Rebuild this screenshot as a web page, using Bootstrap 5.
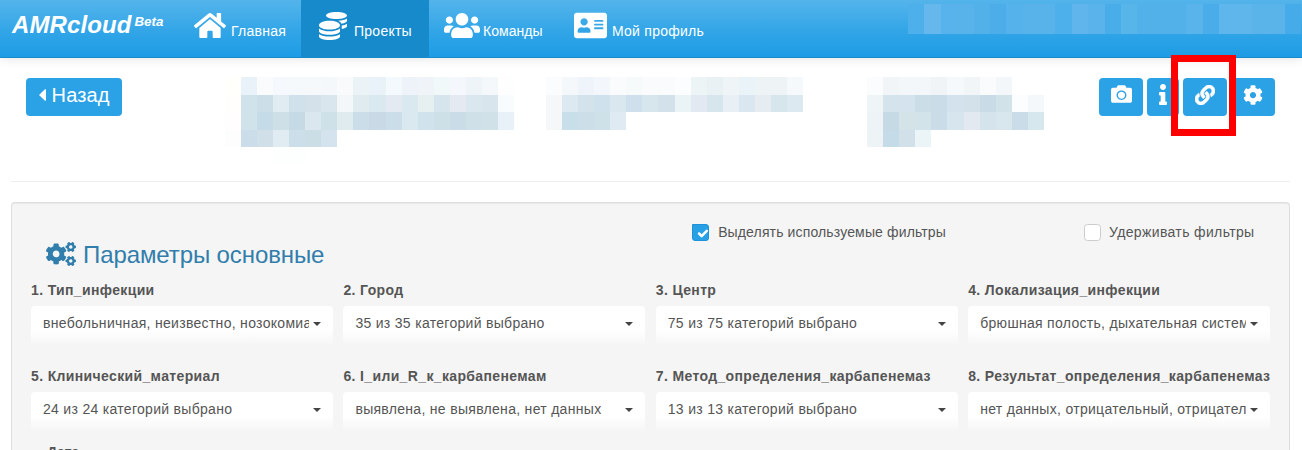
<!DOCTYPE html>
<html lang="ru">
<head>
<meta charset="utf-8">
<meta name="viewport" content="width=device-width, initial-scale=1">
<title>AMRcloud</title>
<link href="https://cdn.jsdelivr.net/npm/bootstrap@5.3.0/dist/css/bootstrap.min.css" rel="stylesheet">
<style>
body{font-family:"Liberation Sans",Arial,sans-serif;font-size:14px;line-height:20px;color:#555;background:#fff;height:450px;overflow:hidden}
svg{fill:currentColor;display:block;flex:none}
.topbar{height:58px;background:linear-gradient(#54b4eb,#2fa4e7 60%,#1d9ce5);border-bottom:1px solid #178acc;box-shadow:0 1px 10px rgba(0,0,0,.1);color:#fff}
.brand{width:178px;padding:11px 0 0 12px;font:italic bold 24px/28px "Liberation Sans",Arial,sans-serif;letter-spacing:.1px;color:#fff;white-space:nowrap}
.brand sup{font-size:13.3px;letter-spacing:0;line-height:0;top:-7px;margin-left:3px;vertical-align:baseline}
.topbar .nav-link{height:57px;padding:0 0 0 16px;color:#fff;font-size:14px;letter-spacing:.25px;line-height:20px;white-space:nowrap;gap:5px}
.topbar .nav-link span{margin-top:21px}
.topbar .nav-link svg{margin-top:10px}
.topbar .nav-link.active{background:#178acc}
.w-home{width:123px}.w-proj{width:128px}.w-team{width:129px}
.topbar .w-team{padding-left:15px;gap:3px;letter-spacing:.05px}
.mosaic{display:grid;flex:none}
.account{width:393px;margin:4px 1px 0 0}
.account i{height:30px}
.strip{height:124px;margin:0 12px 0 11px;border-bottom:1px solid #eee}
.btn-sky{--bs-btn-color:#fff;--bs-btn-bg:#2fa4e7;--bs-btn-border-color:#2fa4e7;--bs-btn-hover-bg:#178acc;--bs-btn-hover-color:#fff;height:38px;border-radius:4px;padding:0;background:#2ba1e6;border:0;display:flex;justify-content:center;color:#fff}
.back{width:96px;font-size:20px;letter-spacing:.1px;line-height:34px;margin:20px 0 0 15px;gap:6px}
.tool-row{margin:20px 15px 0 0;gap:4px}
.tool-row .btn-sky{width:44px;padding-top:8px}
.tool-row .slim{width:32px}
.spot{position:absolute;left:-12px;top:-23px;width:65px;height:81px;border:7px solid #f00;z-index:5;pointer-events:none}
.blk{margin-top:19px}
.panel{margin:20px 12px 0 11px;height:248px;overflow:hidden;background:#f5f5f5;border:1px solid #dedede;border-bottom:0;border-radius:4px 4px 0 0;box-shadow:inset 0 1px 1px rgba(0,0,0,.05);padding:0 19px}
.panel-top{height:77px}
.panel h3{font-size:24px;letter-spacing:-.1px;line-height:28px;color:#317eac;margin:38px 0 0 15px;font-weight:400;gap:7px}
.check{gap:9px;height:20px;margin-top:19px;letter-spacing:.14px}
.check input{width:17px;height:17px;margin:0;border-radius:3px;border:1px solid #ccc;box-shadow:none;background-color:#fff}
.check input:checked{background-color:#28a0e6;border-color:#1f93d8;border-radius:0 3px 3px 3px;background-size:17px 17px;background-position:1px 0}
.check.hold{width:171px;margin:19px 15px 0 138px;gap:8px;letter-spacing:.36px;white-space:nowrap}
.filters{display:grid;grid-template-columns:repeat(4,302px);column-gap:10.4px}
.filters label{display:block;font-weight:bold;font-size:14px;letter-spacing:.36px;line-height:20px;margin-bottom:6px;white-space:nowrap}
.filter-item{height:86px}
.pick{height:40px;border-radius:4px;background:linear-gradient(#fff 60%,#f5f5f5);padding:7px 12px 0 12px;line-height:20px;letter-spacing:.3px;white-space:nowrap}
.pick span{overflow:hidden}
.pick::after{content:"";flex:none;margin:9px 0 0 4px;border:4px solid transparent;border-top-color:#444;border-bottom:0}
</style>
</head>
<body>
<svg width="0" height="0" class="position-absolute"><defs>
<g id="cog-s"><path fill-rule="evenodd" d="M512.1 191l-8.2 14.3c-3 5.3-9.4 7.5-15.1 5.4-11.8-4.4-22.6-10.7-32.1-18.6-4.6-3.8-5.8-10.5-2.8-15.7l8.2-14.3c-6.9-8-12.3-17.3-15.9-27.4h-16.5c-6 0-11.2-4.3-12.2-10.3-2-12-2.1-24.6 0-37.1 1-6 6.2-10.4 12.2-10.4h16.5c3.6-10.1 9-19.4 15.9-27.4l-8.2-14.3c-3-5.2-1.9-11.9 2.8-15.7 9.5-7.9 20.4-14.2 32.1-18.6 5.7-2.1 12.1.1 15.1 5.4l8.2 14.3c10.5-1.9 21.2-1.9 31.7 0L552 6.3c3-5.3 9.4-7.5 15.1-5.4 11.8 4.4 22.6 10.7 32.1 18.6 4.6 3.8 5.8 10.5 2.8 15.7l-8.2 14.3c6.9 8 12.3 17.3 15.9 27.4h16.5c6 0 11.2 4.3 12.2 10.3 2 12 2.1 24.6 0 37.1-1 6-6.2 10.4-12.2 10.4h-16.5c-3.6 10.1-9 19.4-15.9 27.4l8.2 14.3c3 5.2 1.9 11.9-2.8 15.7-9.5 7.9-20.4 14.2-32.1 18.6-5.7 2.1-12.1-.1-15.1-5.4l-8.2-14.3c-10.4 1.9-21.2 1.9-31.7 0zm-10.5-58.8c38.5 29.6 82.4-14.3 52.8-52.8-38.5-29.7-82.4 14.3-52.8 52.8z"/></g>
</defs></svg>

<nav class="topbar d-flex align-items-start position-relative">
  <a class="brand text-decoration-none" href="#">AMRcloud<sup>Beta</sup></a>
  <div class="nav flex-nowrap">
    <a class="nav-link d-flex w-home" href="#"><svg width="32" height="31" viewBox="0 0 576 512"><path d="M280.37 148.26L96 300.11V464a16 16 0 0 0 16 16l112.06-.29a16 16 0 0 0 15.92-16V368a16 16 0 0 1 16-16h64a16 16 0 0 1 16 16v95.64a16 16 0 0 0 16 16.05L464 480a16 16 0 0 0 16-16V300L295.67 148.26a12.19 12.19 0 0 0-15.3 0zM571.6 251.47L488 182.56V44.05a12 12 0 0 0-12-12h-56a12 12 0 0 0-12 12v72.61L318.47 43a48 48 0 0 0-61 0L4.34 251.47a12 12 0 0 0-1.6 16.9l25.5 31A12 12 0 0 0 45.15 301l235.22-193.74a12.19 12.19 0 0 1 15.3 0L530.9 301a12 12 0 0 0 16.9-1.6l25.5-31a12 12 0 0 0-1.7-16.93z"/></svg><span>Главная</span></a>
    <a class="nav-link d-flex active w-proj" href="#"><svg width="32" height="28" viewBox="0 0 512 512" style="margin-top:12px"><path d="M0 405.3V448c0 35.3 86 64 192 64s192-28.7 192-64v-42.7C342.7 434.4 267.2 448 192 448S41.3 434.4 0 405.3zM320 128c106 0 192-28.7 192-64S426 0 320 0 128 28.7 128 64s86 64 192 64zM0 300.4V352c0 35.3 86 64 192 64s192-28.7 192-64v-51.6c-41.3 34-116.9 51.6-192 51.6S41.3 334.4 0 300.4zm416 11c57.3-11.1 96-31.7 96-55.4v-42.7c-23.2 16.4-57.3 27.6-96 34.5v63.6zM192 160C86 160 0 195.8 0 240s86 80 192 80 192-35.8 192-80-86-80-192-80zm219.3 56.3c60-10.8 100.7-32 100.7-56.3v-42.7c-35.5 25.1-96.5 38.6-160.7 41.8 29.5 14.3 51.2 33.5 60 57.2z"/></svg><span>Проекты</span></a>
    <a class="nav-link d-flex w-team" href="#"><svg width="36" height="31" viewBox="0 0 640 512"><path d="M96 224c35.3 0 64-28.7 64-64s-28.7-64-64-64-64 28.7-64 64 28.7 64 64 64zm448 0c35.3 0 64-28.7 64-64s-28.7-64-64-64-64 28.7-64 64 28.7 64 64 64zm32 32h-64c-17.6 0-33.5 7.1-45.1 18.6 40.3 22.1 68.9 62 75.1 109.4h66c17.7 0 32-14.3 32-32v-32c0-35.3-28.7-64-64-64zm-256 0c61.9 0 112-50.1 112-112S381.9 32 320 32 208 82.1 208 144s50.1 112 112 112zm76.8 32h-8.3c-20.8 10-43.9 16-68.5 16s-47.6-6-68.5-16h-8.3C179.6 288 128 339.6 128 403.2V432c0 26.5 21.5 48 48 48h288c26.5 0 48-21.5 48-48v-28.8c0-63.6-51.6-115.2-115.2-115.2zm-223.7-13.4C161.5 263.1 145.6 256 128 256H64c-35.3 0-64 28.7-64 64v32c0 17.7 14.3 32 32 32h65.9c6.3-47.4 34.9-87.3 75.2-109.4z"/></svg><span>Команды</span></a>
    <a class="nav-link d-flex" href="#"><svg width="33" height="31" viewBox="0 0 576 512"><path d="M528 32H48C21.5 32 0 53.5 0 80v352c0 26.5 21.5 48 48 48h480c26.5 0 48-21.5 48-48V80c0-26.5-21.5-48-48-48zm-352 96c35.3 0 64 28.7 64 64s-28.7 64-64 64-64-28.7-64-64 28.7-64 64-64zm112 236.8c0 10.6-10 19.2-22.4 19.2H86.4C74 384 64 375.4 64 364.8v-19.2c0-31.8 30.1-57.6 67.2-57.6h5c12.3 5.1 25.7 8 39.8 8s27.6-2.9 39.8-8h5c37.1 0 67.2 25.8 67.2 57.6v19.2zM512 312c0 4.4-3.6 8-8 8H360c-4.4 0-8-3.6-8-8v-16c0-4.4 3.6-8 8-8h144c4.4 0 8 3.6 8 8v16zm0-64c0 4.4-3.6 8-8 8H360c-4.4 0-8-3.6-8-8v-16c0-4.4 3.6-8 8-8h144c4.4 0 8 3.6 8 8v16zm0-64c0 4.4-3.6 8-8 8H360c-4.4 0-8-3.6-8-8v-16c0-4.4 3.6-8 8-8h144c4.4 0 8 3.6 8 8v16z"/></svg><span>Мой профиль</span></a>
  </div>
  <div class="mosaic account ms-auto" data-rows="30" data-cells="4eb0ea 66b8ec 58b2eb 58b3ea 53b1e9 4cade8 55b2ea 58b3ea 58b3ea 4eb0ea 60b6ec 5bb3eb 48ade9 58b5ea 53b1ea 52b1e9 52b1e9 58b4ea 4aade9 5eb6ec 5eb6eb 5ab4ea 5ab4ea 45ace9"></div>
</nav>

<div class="strip d-flex align-items-start">
  <button class="btn btn-sky back"><svg width="7" height="12" viewBox="0 0 7 12" style="margin-top:11px"><path d="M0 6L6 .3Q7 0 7 1V11Q7 12 6 11.7Z"/></svg>Назад</button>
  <div class="mosaic blk" style="width:289px;margin-left:103px" data-rows="18 17 18 17 18" data-cells="fffffc e9f1f9 fafbfd f5f9fd f5f9fc f5f9fc f4f8fb f9fafc ecf3f6 eaf2f9 f4f9fd edf3f8 f0f4f8 f1f8f9 f4f7fb eef4f8 f4f8fb fefefe/fffefc d0e2ea ccdee7 e0ecf2 d0e1ec d4e1ea d9e6ed f4f7fa e0ebef dae8ef e3eaf2 dae8ef e7f0f1 d5e4ed e5eaf2 dae7ef d8e5ec f8fcff/fffdfd d0e2ea c5dce8 cfdfe8 c6dae5 dae7ef cfe1e8 dfebef cbdde9 c9dae6 cbdde9 dae8ef d0e2ec cddfe7 cadce8 cfe0e9 d0e1e8 e8f0f8/fdfdfd cbdde9 d1dfe9 e1ecf2 cbdee9 cbdee6 d5e3ee - - - - - - - - - - -/- - - fdfefe fdffff - - - - - - - - - - - - -"></div>
  <div class="mosaic blk" style="width:257px;margin-left:32px" data-rows="18 17 18" data-cells="fafcfe f4f8fb eef4f9 f3f7fb f9fbfd f6fafb fafbfd fafbfd fcfdff edf4f6 eaf1f5 eff5f7 eaf3f7 eef3f6 eef4f6 f5f9fc/f5f7f9 dce9f0 d4e2eb cfe1ec dae7ef cfe0ec d7e6ec d3e1ea eaf3f6 e2e9f2 d7e6ed e8f0f5 dae7f0 e5edf2 d7e5ed dce9f0/f5f7f9 c8dee9 ccdee8 cfe1e8 dfeaf3 - - - - - - - - - - -"></div>
  <div class="mosaic blk" style="width:177px;margin-left:64px" data-rows="18 17 18 17" data-cells="fafcfe f2f5f8 f4f7fa f3f7fa f1f4f7 f5f9fc f2f5f8 fafbfd f4f7fa - -/eff5f7 d5e3ed d4e3ed cbdee8 cadce8 d4e2ed d3e1eb c9dbe7 d1e2e9 fcfdfe f4f8fa/edf3f6 c5dae5 d3e3e8 d2e3ea cadce8 d7e5ee e2e9f1 d5e3ec d8e6ed c9dce8 d7e7ee/eef4f6 c5dbe7 d2e0e9 ebf4f7 - - - - - - -"></div>
  <div class="tool-row d-flex ms-auto">
    <button class="btn btn-sky" aria-label="Снимок"><svg width="21" height="20" viewBox="0 0 512 512" preserveAspectRatio="none" style="margin-top:-2px"><path fill-rule="evenodd" d="M512 144v288c0 26.5-21.5 48-48 48H48c-26.5 0-48-21.5-48-48V144c0-26.5 21.5-48 48-48h88l12.3-32.9c7-18.7 24.9-31.1 44.9-31.1h125.5c20 0 37.9 12.4 44.9 31.1L376 96h88c26.5 0 48 21.5 48 48zM376 288c0-66.2-53.8-120-120-120s-120 53.8-120 120 53.8 120 120 120 120-53.8 120-120zm-32 0c0 48.5-39.5 88-88 88s-88-39.5-88-88 39.5-88 88-88 88 39.5 88 88z"/></svg></button>
    <button class="btn btn-sky slim" aria-label="Информация"><svg width="8" height="21" viewBox="0 0 192 512" style="margin-top:-2px"><path d="M20 424.229h20V279.771H20c-11.046 0-20-8.954-20-20V212c0-11.046 8.954-20 20-20h112c11.046 0 20 8.954 20 20v212.229h20c11.046 0 20 8.954 20 20V492c0 11.046-8.954 20-20 20H20c-11.046 0-20-8.954-20-20v-47.771c0-11.046 8.954-20 20-20zM96 0C56.235 0 24 32.235 24 72s32.235 72 72 72 72-32.235 72-72S135.764 0 96 0z"/></svg></button>
    <div class="position-relative"><button class="btn btn-sky" aria-label="Ссылка"><svg width="20" height="20" viewBox="0 0 512 512" style="margin-top:-1px"><path d="M326.612 185.391c59.747 59.809 58.927 155.698.36 214.59-.11.12-.24.25-.36.37l-67.2 67.2c-59.27 59.27-155.699 59.262-214.96 0-59.27-59.26-59.27-155.7 0-214.96l37.106-37.106c9.84-9.84 26.786-3.3 27.294 10.606.648 17.722 3.826 35.527 9.69 52.721 1.986 5.822.567 12.262-3.783 16.612l-13.087 13.087c-28.026 28.026-28.905 73.66-1.155 101.96 28.024 28.579 74.086 28.749 102.325.51l67.2-67.19c28.191-28.191 28.073-73.757 0-101.83-3.701-3.694-7.429-6.564-10.341-8.569a16.037 16.037 0 0 1-6.947-12.606c-.396-10.567 3.348-21.456 11.698-29.806l21.054-21.055c5.521-5.521 14.182-6.199 20.584-1.731a152.482 152.482 0 0 1 20.522 17.197zM467.547 44.449c-59.261-59.262-155.69-59.27-214.96 0l-67.2 67.2c-.12.12-.25.25-.36.37-58.566 58.892-59.387 154.781.36 214.59a152.454 152.454 0 0 0 20.521 17.196c6.402 4.468 15.064 3.789 20.584-1.731l21.054-21.055c8.35-8.35 12.094-19.239 11.698-29.806a16.037 16.037 0 0 0-6.947-12.606c-2.912-2.005-6.64-4.875-10.341-8.569-28.073-28.073-28.191-73.639 0-101.83l67.2-67.19c28.239-28.239 74.3-28.069 102.325.51 27.75 28.3 26.872 73.934-1.155 101.96l-13.087 13.087c-4.35 4.35-5.769 10.79-3.783 16.612 5.864 17.194 9.042 34.999 9.69 52.721.509 13.906 17.454 20.446 27.294 10.606l37.106-37.106c59.271-59.259 59.271-155.699.001-214.959z" stroke="currentColor" stroke-width="14"/></svg></button><div class="spot"></div></div>
    <button class="btn btn-sky" aria-label="Настройки"><svg width="20" height="20" viewBox="0 0 512 512" style="margin-top:-1px"><path d="M487.4 315.7l-42.6-24.6c4.3-23.2 4.3-47 0-70.2l42.6-24.6c4.9-2.8 7.1-8.6 5.5-14-11.1-35.6-30-67.8-54.7-94.6-3.8-4.1-10-5.1-14.8-2.3L380.8 110c-17.9-15.4-38.5-27.3-60.8-35.1V25.8c0-5.6-3.9-10.5-9.4-11.7-36.7-8.2-74.3-7.8-109.2 0-5.5 1.2-9.4 6.1-9.4 11.7V75c-22.2 7.9-42.8 19.8-60.8 35.1L88.7 85.5c-4.9-2.8-11-1.9-14.8 2.3-24.7 26.7-43.6 58.9-54.7 94.6-1.7 5.4.6 11.2 5.5 14L67.3 221c-4.3 23.2-4.3 47 0 70.2l-42.6 24.6c-4.9 2.8-7.1 8.6-5.5 14 11.1 35.6 30 67.8 54.7 94.6 3.8 4.1 10 5.1 14.8 2.3l42.6-24.6c17.9 15.4 38.5 27.3 60.8 35.1v49.2c0 5.6 3.9 10.5 9.4 11.7 36.7 8.2 74.3 7.8 109.2 0 5.5-1.2 9.4-6.1 9.4-11.7v-49.2c22.2-7.9 42.8-19.8 60.8-35.1l42.6 24.6c4.9 2.8 11 1.9 14.8-2.3 24.7-26.7 43.6-58.9 54.7-94.6 1.5-5.5-.7-11.3-5.6-14.1zM256 336c-44.1 0-80-35.9-80-80s35.9-80 80-80 80 35.9 80 80-35.9 80-80 80z"/></svg></button>
  </div>
</div>

<main class="panel">
  <div class="panel-top d-flex">
    <h3 class="d-flex"><svg width="30" height="24" viewBox="0 0 640 512" style="margin-top:1px"><path fill-rule="evenodd" d="M386.3 286.1l33.7 16.8c10.1 5.8 14.5 18.1 10.5 29.1-8.9 24.2-26.4 46.4-42.6 65.8-7.4 8.9-20.2 11.1-30.3 5.3l-29.1-16.8c-16 13.7-34.6 24.6-54.9 31.7v33.6c0 11.6-8.3 21.6-19.7 23.6-24.6 4.2-50.4 4.4-75.9 0-11.5-2-20-11.9-20-23.6V418c-20.3-7.2-38.9-18-54.9-31.7L74 403c-10 5.8-22.9 3.6-30.3-5.3-16.2-19.4-33.3-41.6-42.2-65.7-4-10.9.4-23.2 10.5-29.1l33.3-16.8c-3.9-20.9-3.9-42.4 0-63.4L12 205.8c-10.1-5.8-14.6-18.1-10.5-29 8.9-24.2 26-46.4 42.2-65.8 7.4-8.9 20.2-11.1 30.3-5.3l29.1 16.8c16-13.7 34.6-24.6 54.9-31.7V57.1c0-11.5 8.2-21.5 19.6-23.5 24.6-4.2 50.5-4.4 76-.1 11.5 2 20 11.9 20 23.6v33.6c20.3 7.2 38.9 18 54.9 31.7l29.1-16.8c10-5.8 22.9-3.6 30.3 5.3 16.2 19.4 33.2 41.6 42.1 65.8 4 10.9.1 23.2-10 29.1l-33.7 16.8c3.9 21 3.9 42.5 0 63.5zm-117.6 21.1c59.2-77-28.7-164.9-105.7-105.7-59.2 77 28.7 164.9 105.7 105.7z"/><use href="#cog-s"/><use href="#cog-s" y="299"/></svg><span>Параметры основные</span></h3>
    <label class="check d-flex align-items-center ms-auto"><input class="form-check-input" type="checkbox" checked><span>Выделять используемые фильтры</span></label>
    <label class="check d-flex align-items-center hold"><input class="form-check-input" type="checkbox"><span>Удерживать фильтры</span></label>
  </div>
  <div class="filters">
    <div class="filter-item"><label>1. Тип_инфекции</label><div class="pick d-flex justify-content-between"><span>внебольничная, неизвестно, нозокомиальная</span></div></div>
    <div class="filter-item"><label>2. Город</label><div class="pick d-flex justify-content-between"><span>35 из 35 категорий выбрано</span></div></div>
    <div class="filter-item"><label>3. Центр</label><div class="pick d-flex justify-content-between"><span>75 из 75 категорий выбрано</span></div></div>
    <div class="filter-item"><label>4. Локализация_инфекции</label><div class="pick d-flex justify-content-between"><span>брюшная полость, дыхательная система</span></div></div>
    <div class="filter-item"><label>5. Клинический_материал</label><div class="pick d-flex justify-content-between"><span>24 из 24 категорий выбрано</span></div></div>
    <div class="filter-item"><label>6. I_или_R_к_карбапенемам</label><div class="pick d-flex justify-content-between"><span>выявлена, не выявлена, нет данных</span></div></div>
    <div class="filter-item"><label>7. Метод_определения_карбапенемаз</label><div class="pick d-flex justify-content-between"><span>13 из 13 категорий выбрано</span></div></div>
    <div class="filter-item"><label>8. Результат_определения_карбапенемаз</label><div class="pick d-flex justify-content-between"><span>нет данных, отрицательный, отрицательный</span></div></div>
  </div>
  <div class="fw-bold" style="margin:-10px 0 0 16px">Дата</div>
</main>
<script src="https://cdn.jsdelivr.net/npm/bootstrap@5.3.0/dist/js/bootstrap.bundle.min.js"></script>
<script>
document.querySelectorAll('.mosaic').forEach(function (m) {
  var rows = m.dataset.cells.split('/').map(function (r) { return r.split(' '); });
  m.style.gridTemplateColumns = 'repeat(' + rows[0].length + ',1fr)';
  m.style.gridTemplateRows = m.dataset.rows.split(' ').map(function (h) { return h + 'px'; }).join(' ');
  rows.flat().forEach(function (c) {
    var i = document.createElement('i');
    if (c !== '-') i.style.background = '#' + c;
    m.appendChild(i);
  });
});
</script>
</body>
</html>
